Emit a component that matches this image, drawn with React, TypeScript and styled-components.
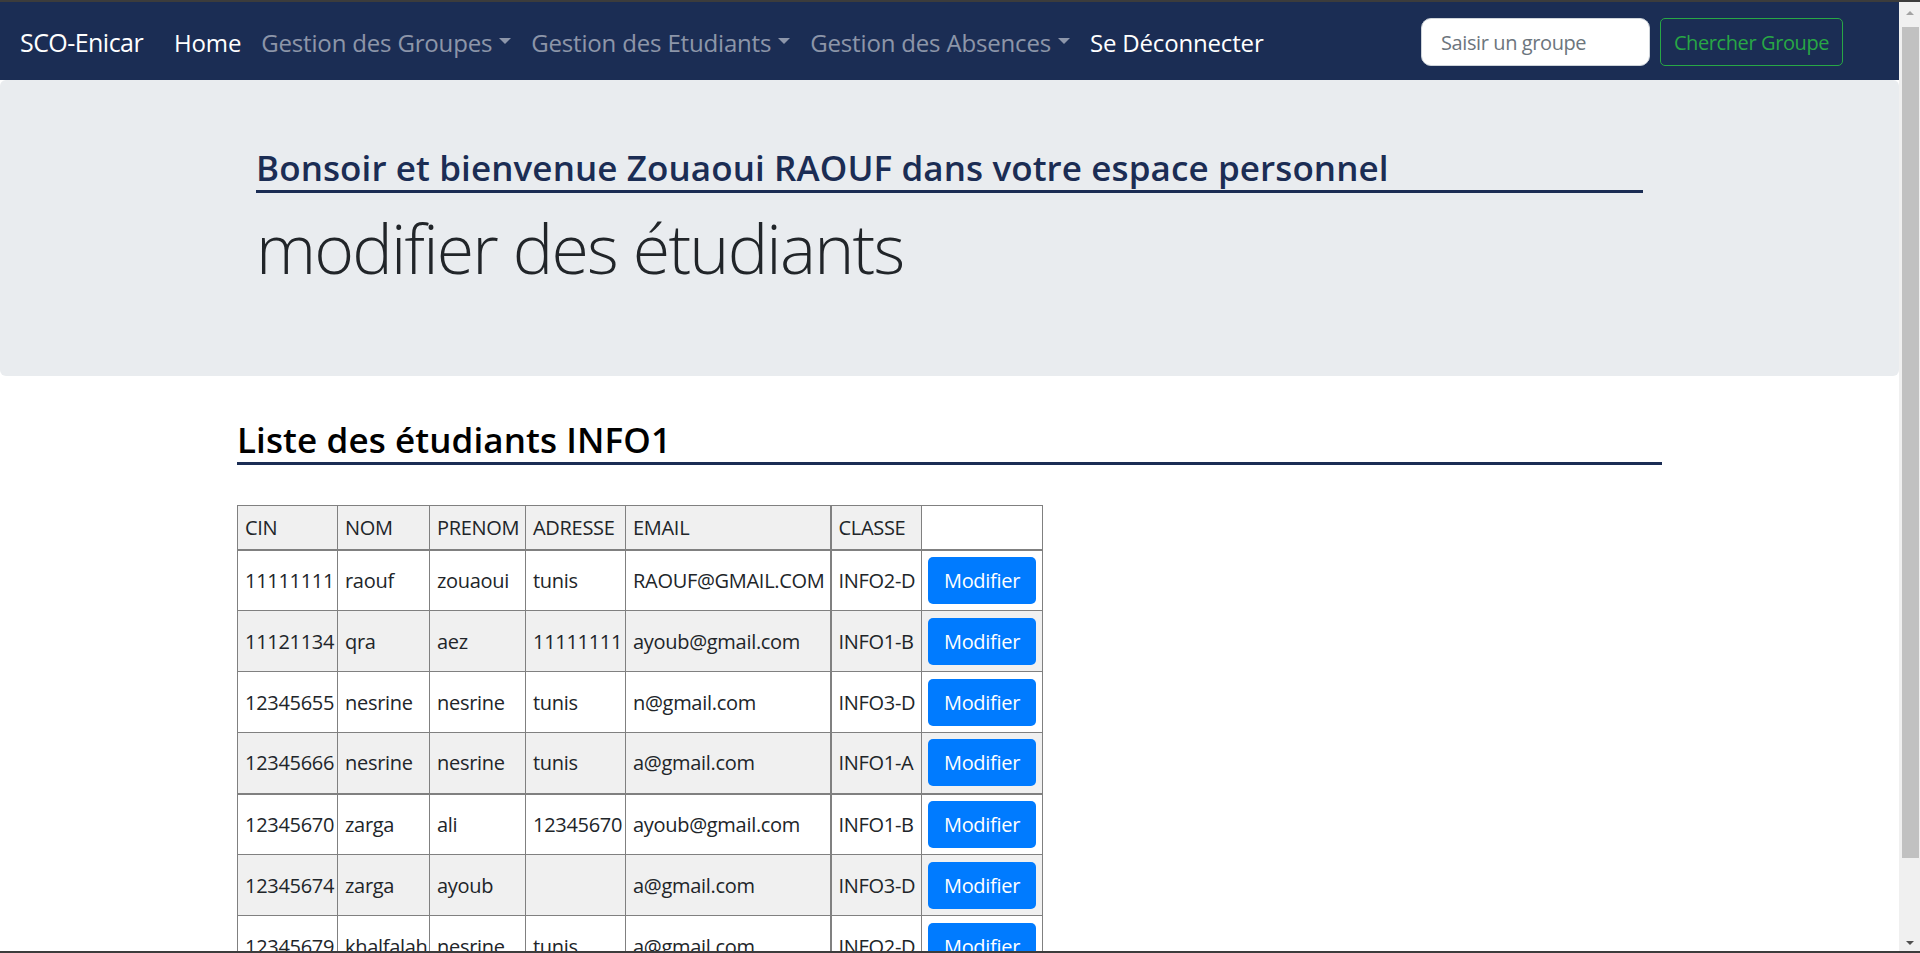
import React from "react";
import styled, { createGlobalStyle } from "styled-components";

const GlobalStyle = createGlobalStyle`
  * { box-sizing: border-box; }
  html, body { margin: 0; padding: 0; height: 100%; overflow: hidden; background: #fff; }
  body { font-family: "Open Sans", "Noto Sans", sans-serif; color: #212529; }
  #root { height: 100%; }
`;

const NAVY = "#1b2d54";

const Frame = styled.div`
  height: 953px;
  display: flex;
  flex-direction: column;
  border-top: 2px solid #3c3c3c;
  border-bottom: 2px solid #3c3c3c;
`;

const Viewport = styled.div`
  flex: 1;
  min-height: 0;
  display: flex;
`;

const Page = styled.div`
  flex: 1;
  min-width: 0;
  overflow: hidden;
  background: #fff;
`;

const ScrollRail = styled.div`
  flex: none;
  width: 21px;
  background: #f0f0f0;
  display: flex;
  flex-direction: column;
  align-items: center;
  padding: 0 1px 0 2px;
`;

const ScrollArrow = styled.div<{ $down?: boolean }>`
  flex: none;
  height: ${(p) => (p.$down ? "17px" : "25px")};
  width: 100%;
  display: flex;
  align-items: center;
  justify-content: center;
  &::before {
    content: "";
    width: 0;
    height: 0;
    border-left: 4px solid transparent;
    border-right: 4px solid transparent;
    ${(p) =>
      p.$down
        ? "border-top: 4px solid #505050;"
        : "border-bottom: 4px solid #a3a3a3; margin-top: -4px;"}
  }
`;

const ScrollThumb = styled.div`
  flex: none;
  width: 17px;
  height: 831px;
  background: #c1c1c1;
`;

const ScrollSpace = styled.div`
  flex: 1;
`;

const Navbar = styled.nav`
  height: 78px;
  background: ${NAVY};
  display: flex;
  align-items: center;
  padding: 2px 56px 0 20px;
`;

const Brand = styled.a`
  color: #fff;
  font-size: 25px;
  letter-spacing: -0.55px;
  margin-right: 21px;
  text-decoration: none;
  white-space: nowrap;
`;

const NavList = styled.ul`
  display: flex;
  align-items: center;
  list-style: none;
  margin: 0 auto 0 0;
  padding: 0;
`;

const NavLink = styled.a<{ $active?: boolean }>`
  display: flex;
  align-items: center;
  padding: 0 10px;
  font-size: 24px;
  letter-spacing: -0.17px;
  white-space: nowrap;
  text-decoration: none;
  color: ${(p) => (p.$active ? "#fff" : "rgba(255,255,255,0.5)")};
`;

const Caret = styled.span`
  display: inline-block;
  width: 0;
  height: 0;
  margin-left: 7px;
  margin-top: -3px;
  border-top: 6px solid currentColor;
  border-left: 6px solid transparent;
  border-right: 6px solid transparent;
`;

const SearchForm = styled.form`
  display: flex;
  align-items: center;
  gap: 10px;
  margin: 0;
`;

const SearchInput = styled.input`
  width: 229px;
  height: 48px;
  border: 1px solid #ced4da;
  border-radius: 10px;
  padding: 0 19px;
  font-family: inherit;
  font-size: 20px;
  color: #495057;
  background: #fff;
  outline: none;
  &::placeholder {
    color: #6c757d;
    letter-spacing: -0.4px;
  }
`;

const OutlineButton = styled.button`
  width: 183px;
  height: 48px;
  border: 1px solid #28a745;
  border-radius: 5px;
  background: transparent;
  color: #28a745;
  font-family: inherit;
  font-size: 20px;
  letter-spacing: -0.4px;
  padding: 0;
`;

const Jumbotron = styled.header`
  background: #e9ecef;
  border-radius: 6px;
  padding: 67px 0 86px;
  margin-bottom: 40px;
`;

const Container = styled.div<{ $flush?: boolean }>`
  width: 1425px;
  margin: 0 auto;
  padding: 0 ${(p) => (p.$flush ? "0" : "19px")};
`;

const SectionTitle = styled.h3<{ $tone: "navy" | "black" }>`
  margin: 0;
  font-size: 35px;
  font-weight: 600;
  line-height: 42px;
  padding-bottom: 1px;
  letter-spacing: 0.1px;
  color: ${(p) => (p.$tone === "navy" ? NAVY : "#000")};
  border-bottom: 3px solid ${NAVY};
`;

const DisplayTitle = styled.h1`
  margin: 13px 0 0;
  font-size: 68px;
  font-weight: 300;
  line-height: 84px;
  letter-spacing: -1.8px;
  color: #212529;
`;

const Section = styled.section`
  padding-top: 3px;
`;

const Table = styled.table`
  margin-top: 40px;
  width: 805px;
  table-layout: fixed;
  border-collapse: collapse;
  font-size: 20px;
  color: #212529;
  letter-spacing: -0.3px;

  th,
  td {
    border: 1px solid #808080;
    padding: 0 0 0 7px;
    text-align: left;
    font-weight: 400;
    white-space: nowrap;
    overflow: hidden;
    vertical-align: middle;
  }
  th:nth-child(6),
  td:nth-child(6) {
    border-left-width: 2px;
  }
  th {
    height: 44px;
    background: #f0f0f0;
    border-bottom-width: 2px;
  }
  th:last-child {
    background: #fff;
  }
  td {
    height: 61px;
  }
  tbody tr:nth-child(even) td {
    background: #f0f0f0;
  }
  tbody tr:nth-child(4) td {
    border-bottom-width: 2px;
  }
  td:last-child {
    padding: 0 6px;
  }
`;

const ActionButton = styled.button`
  width: 100%;
  height: 47px;
  border: none;
  border-radius: 5px;
  background: #007bff;
  color: #fff;
  font-family: inherit;
  font-size: 20px;
  letter-spacing: -0.3px;
  padding: 0;
`;

const columns = [100, 92, 96, 100, 205, 91, 121];
const headers = ["CIN", "NOM", "PRENOM", "ADRESSE", "EMAIL", "CLASSE", ""];

const students = [
  ["11111111", "raouf", "zouaoui", "tunis", "RAOUF@GMAIL.COM", "INFO2-D"],
  ["11121134", "qra", "aez", "11111111", "ayoub@gmail.com", "INFO1-B"],
  ["12345655", "nesrine", "nesrine", "tunis", "n@gmail.com", "INFO3-D"],
  ["12345666", "nesrine", "nesrine", "tunis", "a@gmail.com", "INFO1-A"],
  ["12345670", "zarga", "ali", "12345670", "ayoub@gmail.com", "INFO1-B"],
  ["12345674", "zarga", "ayoub", "", "a@gmail.com", "INFO3-D"],
  ["12345679", "khalfalah", "nesrine", "tunis", "a@gmail.com", "INFO2-D"],
];

export default function App() {
  return (
    <>
      <GlobalStyle />
      <Frame>
        <Viewport>
          <Page>
            <Navbar>
              <Brand href="#">SCO-Enicar</Brand>
              <NavList>
                <li>
                  <NavLink $active href="#">Home</NavLink>
                </li>
                <li>
                  <NavLink href="#">
                    Gestion des Groupes<Caret />
                  </NavLink>
                </li>
                <li>
                  <NavLink href="#">
                    Gestion des Etudiants<Caret />
                  </NavLink>
                </li>
                <li>
                  <NavLink href="#">
                    Gestion des Absences<Caret />
                  </NavLink>
                </li>
                <li>
                  <NavLink $active href="#">Se Déconnecter</NavLink>
                </li>
              </NavList>
              <SearchForm onSubmit={(e) => e.preventDefault()}>
                <SearchInput placeholder="Saisir un groupe" />
                <OutlineButton type="submit">Chercher Groupe</OutlineButton>
              </SearchForm>
            </Navbar>

            <Jumbotron>
              <Container>
                <SectionTitle $tone="navy">
                  Bonsoir et bienvenue Zouaoui RAOUF dans votre espace personnel
                </SectionTitle>
                <DisplayTitle>modifier des étudiants</DisplayTitle>
              </Container>
            </Jumbotron>

            <Section>
              <Container $flush>
                <SectionTitle $tone="black">Liste des étudiants INFO1</SectionTitle>
                <Table>
                  <colgroup>
                    {columns.map((w, i) => (
                      <col key={i} style={{ width: w }} />
                    ))}
                  </colgroup>
                  <thead>
                    <tr>
                      {headers.map((h, i) => (
                        <th key={i}>{h}</th>
                      ))}
                    </tr>
                  </thead>
                  <tbody>
                    {students.map((row) => (
                      <tr key={row[0]}>
                        {row.map((cell, i) => (
                          <td key={i}>{cell}</td>
                        ))}
                        <td>
                          <ActionButton type="button">Modifier</ActionButton>
                        </td>
                      </tr>
                    ))}
                  </tbody>
                </Table>
              </Container>
            </Section>
          </Page>
          <ScrollRail>
            <ScrollArrow />
            <ScrollThumb />
            <ScrollSpace />
            <ScrollArrow $down />
          </ScrollRail>
        </Viewport>
      </Frame>
    </>
  );
}
